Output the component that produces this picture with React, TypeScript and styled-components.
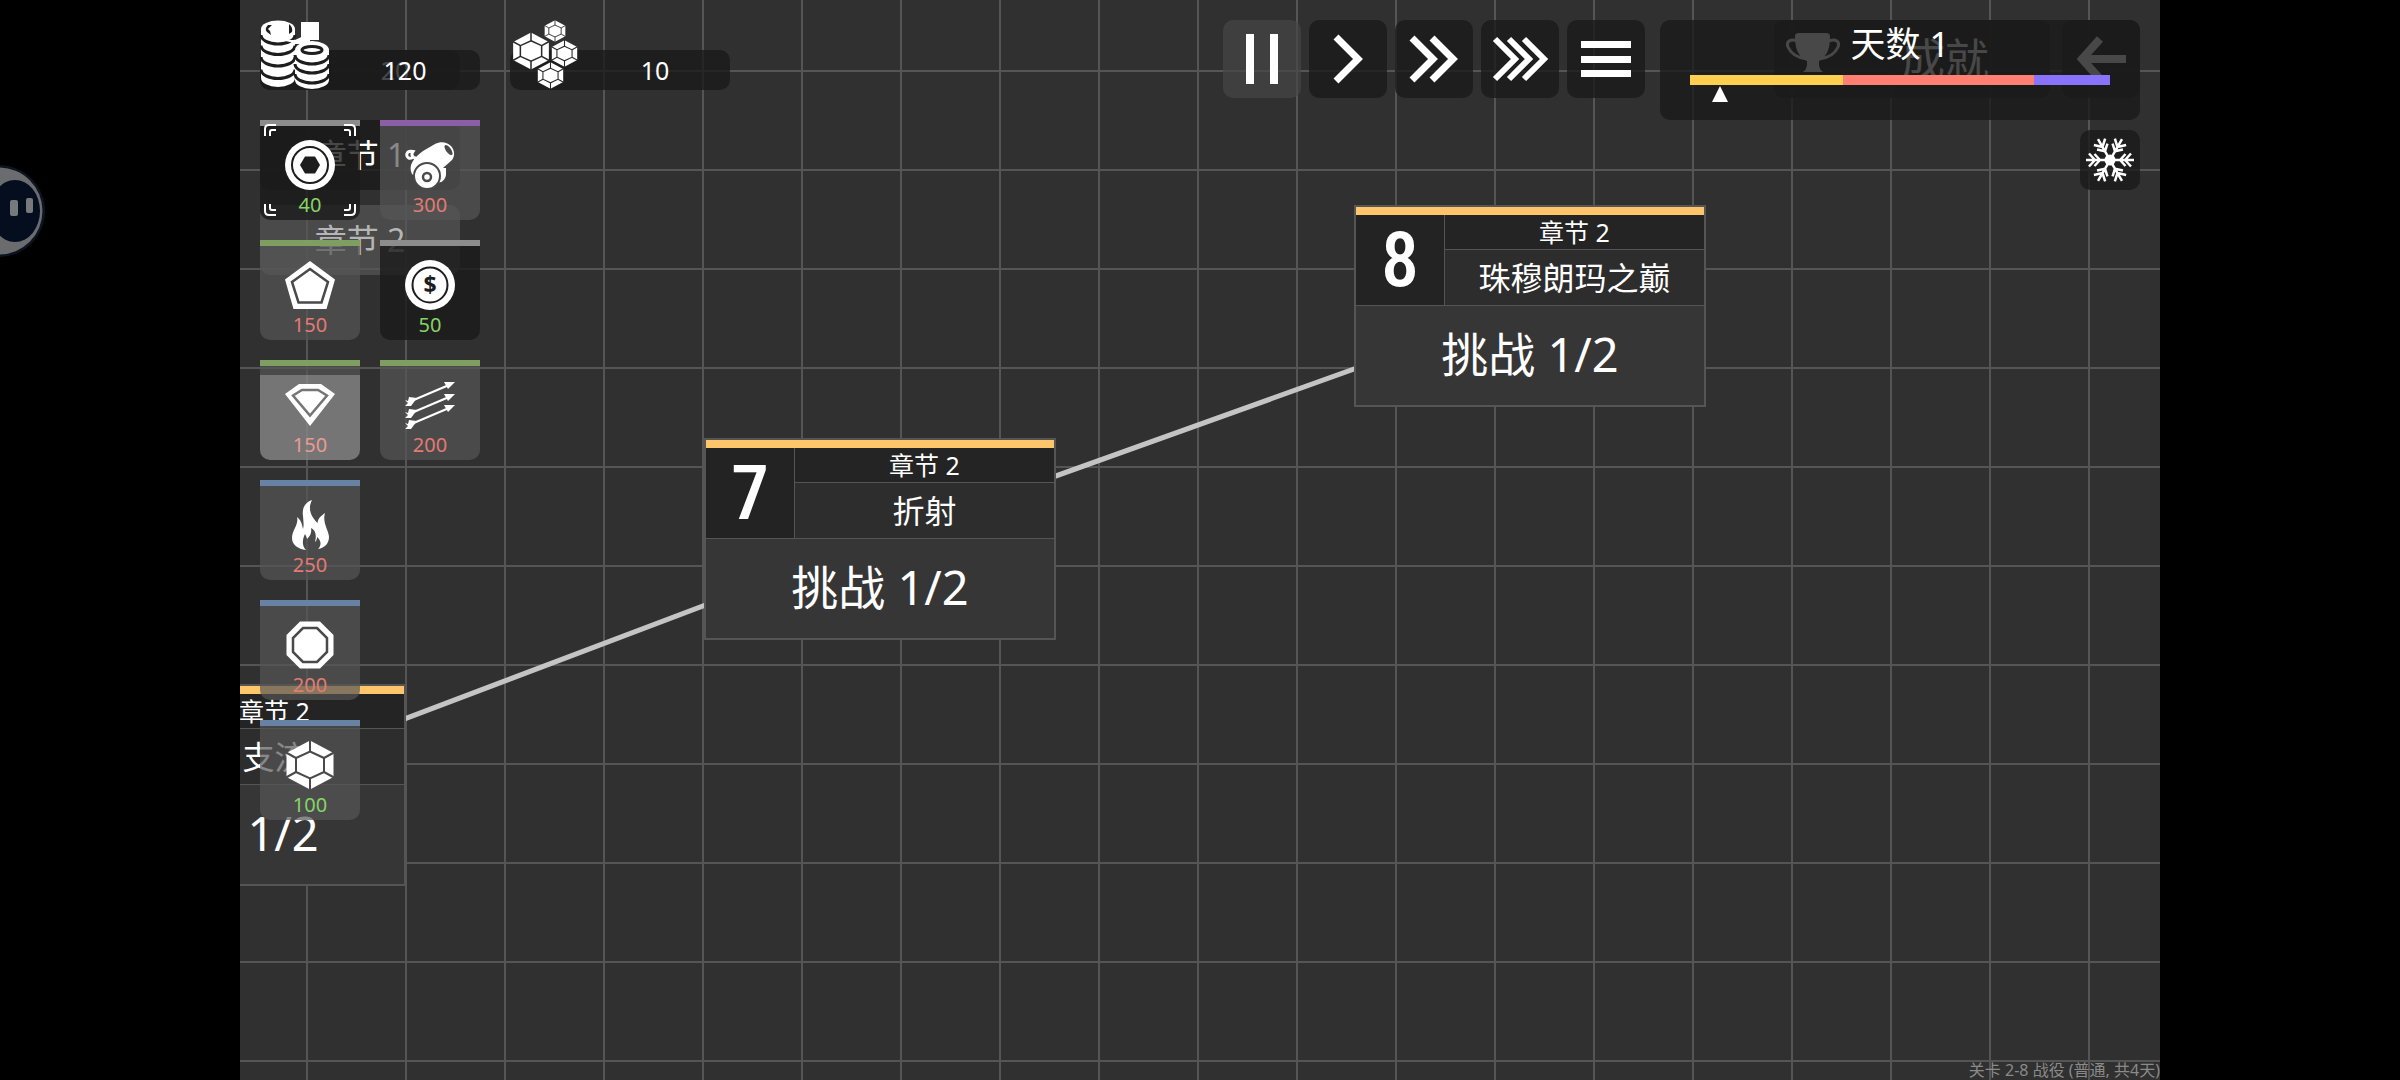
import React from "react";
import styled, { createGlobalStyle } from "styled-components";

const GlobalStyle = createGlobalStyle`
  *, *::before, *::after { box-sizing: border-box; }
  body {
    margin: 0;
    background: #000;
    color: #fff;
    font-family: "Noto Sans", "Noto Sans CJK SC", sans-serif;
  }
  button {
    border: 0;
    padding: 0;
    margin: 0;
    color: inherit;
    font: inherit;
    cursor: pointer;
  }
`;

const DARK = "rgba(26, 26, 26, 0.8)";
const MUTED = "rgba(85, 85, 85, 0.7)";
const INK_DARK = "#1d1d1d";
const INK_MUTED = "#4a4a4a";

const Screen = styled.div`
  display: flex;
  justify-content: center;
  height: 100vh;
  position: relative;
  overflow: hidden;
`;

/* 16:9 play field, layers share the single grid cell */
const Stage = styled.main`
  display: grid;
  height: 100%;
  aspect-ratio: 16 / 9;
  overflow: hidden;
  background-color: #303030;
  background-image: linear-gradient(to right, #555 2px, transparent 2px),
    linear-gradient(to bottom, #555 2px, transparent 2px);
  background-size: 99px 99px;
  background-position: 66px 70px;
  > * { grid-area: 1 / 1; min-width: 0; min-height: 0; }
`;

const Layer = styled.div`
  display: flex;
  justify-content: space-between;
  align-items: flex-start;
  padding: 20px;
`;

const Side = styled.div<{ $end?: boolean; $gap: number }>`
  display: flex;
  flex-direction: column;
  align-items: ${(p) => (p.$end ? "flex-end" : "flex-start")};
  gap: ${(p) => p.$gap}px;
`;

const Row = styled.div<{ $gap: number }>`
  display: flex;
  align-items: flex-start;
  gap: ${(p) => p.$gap}px;
`;

/* ---------- campaign map ---------- */

const MapCanvas = styled.div`
  position: relative;
  overflow: hidden;
`;

const Links = styled.svg`
  position: absolute;
  inset: 0;
  width: 100%;
  height: 100%;
`;

const Level = styled.button<{ $x: number; $y: number }>`
  position: absolute;
  left: ${(p) => p.$x}px;
  top: ${(p) => p.$y}px;
  width: 352px;
  display: grid;
  grid-template-columns: 89px 1fr;
  grid-template-rows: 8px 35px 56px 99px;
  border: 2px solid #555;
  background: #363636;
`;

const LevelStripe = styled.span`
  grid-column: 1 / -1;
  background: #ffc56b;
`;

const LevelNumber = styled.span`
  grid-row: 2 / 4;
  display: flex;
  align-items: center;
  justify-content: center;
  background: #232323;
  border-right: 1px solid #555;
  border-bottom: 1px solid #555;
  font-family: "Roboto Condensed", Roboto, sans-serif;
  font-weight: 500;
  font-size: 76px;
  line-height: 80px;
`;

const LevelChapter = styled.span`
  background: #242424;
  border-bottom: 1px solid #555;
  font-size: 25px;
  line-height: 34px;
`;

const LevelName = styled.span`
  background: #2d2d2d;
  border-bottom: 1px solid #555;
  font-size: 32px;
  line-height: 55px;
`;

const LevelChallenge = styled.span`
  grid-column: 1 / -1;
  font-size: 47px;
  line-height: 96px;
`;

/* ---------- shared HUD parts ---------- */

const Resource = styled.div<{ $width: number }>`
  width: ${(p) => p.$width}px;
  display: grid;
  grid-template: 30px 40px / 70px 1fr;
`;

const ResourcePlate = styled.div`
  grid-area: 2 / 1 / 3 / 3;
  background: ${DARK};
  border-radius: 10px;
`;

const ResourceIcon = styled.svg`
  grid-area: 1 / 1 / 3 / 2;
  width: 70px;
  height: 70px;
`;

const ResourceValue = styled.span`
  grid-area: 2 / 2;
  font-size: 25px;
  line-height: 40px;
  text-align: center;
`;

const SquareButton = styled.button<{ $muted?: boolean; $size?: number }>`
  width: ${(p) => p.$size ?? 78}px;
  height: ${(p) => p.$size ?? 78}px;
  border-radius: 10px;
  background: ${(p) => (p.$muted ? "rgba(70, 70, 70, 0.7)" : DARK)};
  svg { display: block; width: 100%; height: 100%; }
`;

/* ---------- campaign menu ---------- */

const ChapterList = styled.nav`
  display: flex;
  flex-direction: column;
  gap: 15px;
`;

const ChapterButton = styled.button<{ $muted?: boolean }>`
  width: 200px;
  height: 70px;
  border-radius: 10px;
  background: ${(p) => (p.$muted ? MUTED : DARK)};
  && { color: ${(p) => (p.$muted ? "#b5b5b5" : "#fff")}; }
  font-size: 32px;
  line-height: 66px;
`;

const AchievementButton = styled.button`
  display: flex;
  align-items: center;
  width: 276px;
  height: 78px;
  padding-left: 12px;
  border-radius: 10px;
  background: ${DARK};
  svg { width: 54px; height: 54px; }
`;

const AchievementLabel = styled.span`
  flex: 1;
  font-size: 44px;
  line-height: 72px;
`;

/* ---------- towers ---------- */

const TowerGrid = styled.div`
  display: grid;
  grid-template-rows: repeat(6, 100px);
  grid-auto-columns: 100px;
  grid-auto-flow: column;
  gap: 20px;
`;

const tierColors = {
  gray: "#8c8c8c",
  purple: "#8c5ea6",
  green: "#7f9f61",
  blue: "#6682a4",
};

const TowerCard = styled.button<{ $tier: keyof typeof tierColors; $muted: boolean }>`
  position: relative;
  display: flex;
  flex-direction: column;
  align-items: center;
  border-radius: 0 0 10px 10px;
  background: ${(p) => (p.$muted ? MUTED : DARK)};
  &::before {
    content: "";
    width: 100%;
    height: 6px;
    margin-bottom: 14px;
    background: ${(p) => tierColors[p.$tier]};
  }
`;

const TowerIcon = styled.svg`
  position: relative;
  width: 50px;
  height: 50px;
`;

const TowerPrice = styled.span<{ $affordable: boolean }>`
  font-size: 20px;
  line-height: 30px;
  color: ${(p) => (p.$affordable ? "#86d466" : "#e27b72")};
`;

const Charge = styled.span`
  position: absolute;
  inset: 15px 0 0;
  border-radius: 0 0 10px 10px;
  background: rgba(255, 255, 255, 0.24);
`;

const Brackets = styled.svg`
  position: absolute;
  inset: 4px;
  width: 92px;
  height: 92px;
`;

/* ---------- day panel ---------- */

const DayPanel = styled.section`
  width: 480px;
  height: 100px;
  padding: 0 30px;
  border-radius: 10px;
  background: ${DARK};
`;

const DayTitle = styled.h1`
  margin: 0 0 7px;
  font-size: 35px;
  font-weight: 400;
  line-height: 48px;
  text-align: center;
`;

const DayBar = styled.div`
  display: flex;
  height: 10px;
`;

const DayPhase = styled.span<{ $share: number; $color: string }>`
  flex: ${(p) => p.$share};
  background: ${(p) => p.$color};
`;

const DayMarker = styled.svg`
  display: block;
  width: 16px;
  height: 16px;
  margin: 1px 0 0 22px;
`;

const Footer = styled.footer`
  align-self: end;
  justify-self: end;
  color: #8a8a8a;
  font-size: 16px;
  line-height: 20px;
`;

/* floating assist ball docked at the screen edge */
const AssistBall = styled.svg`
  position: absolute;
  left: 0;
  top: 165px;
  width: 48px;
  height: 92px;
`;

/* ---------- drawings ---------- */

const HEX = "25,0.5 48.5,13 48.5,37 25,49.5 1.5,37 1.5,13";

const HexGem = ({ ink }: { ink: string }) => (
  <g>
    <polygon points={HEX} fill="#fff" />
    <g fill="none" stroke={ink} strokeWidth="2">
      <polygon points="25,11.5 39,18 39,32 25,38.5 11,32 11,18" />
      <path d="M25 0V11.5M25 38.5V50M39 18L49 12.5M39 32L49 37.5M11 18L1 12.5M11 32L1 37.5" />
    </g>
  </g>
);

const CoinStackIcon = () => (
  <ResourceIcon viewBox="0 0 70 70">
    <path d="M41 2h18v18h-18z" fill="#fff" />
    <path d="M1 9V58A17 9 0 0 0 35 58V9z" fill="#fff" />
    <ellipse cx="18" cy="9" rx="17" ry="8.5" fill="#fff" />
    <path d="M29 4Q33 7 32 12L29 14z M8 5Q4 9 7 12L11 15L10 11L8 9L12 5z" fill={INK_DARK} />
    <g fill="none" stroke={INK_DARK} strokeWidth="3">
      <path d="M1 15A17 9 0 0 0 35 15" />
      <path d="M1 25.5A17 9 0 0 0 35 25.5" />
      <path d="M1 37A17 9 0 0 0 35 37" />
      <path d="M1 49.5A17 9 0 0 0 35 49.5" />
    </g>
    <path d="M11 4H29V19H20z" fill="#fff" />
    <path d="M20 20L35 20L50 13V24H35L30 22z" fill="#fff" />
    <path d="M35 30V60A17 9 0 0 0 69 60V30z" fill="#fff" />
    <ellipse cx="52" cy="30" rx="17" ry="9" fill="#fff" />
    <ellipse cx="52" cy="30" rx="10" ry="3.5" fill="#fff" stroke={INK_DARK} strokeWidth="3" />
    <g fill="none" stroke={INK_DARK} strokeWidth="3">
      <path d="M35 35A17 9 0 0 0 69 35" />
      <path d="M35 44A17 9 0 0 0 69 44" />
      <path d="M35 54A17 9 0 0 0 69 54" />
    </g>
  </ResourceIcon>
);

const gemSpots = [
  { x: 2, y: 12, size: 38 },
  { x: 34, y: 0, size: 22 },
  { x: 41, y: 20, size: 27 },
  { x: 27, y: 42, size: 27 },
];

const GemClusterIcon = () => (
  <ResourceIcon viewBox="0 0 70 70">
    {gemSpots.map((g) => (
      <svg key={g.x} x={g.x} y={g.y} width={g.size} height={g.size} viewBox="0 0 50 50">
        <HexGem ink="#2a2a2a" />
      </svg>
    ))}
  </ResourceIcon>
);

const Arrow = ({ y }: { y: number }) => (
  <g transform={`translate(0 ${y})`}>
    <path d="M4 22L44 5" stroke="#fff" strokeWidth="2.2" />
    <path d="M50 2L39 2L43 9z" fill="#fff" />
    <path d="M0 20L3 21L4 17L12 18L6 26L0 26L3 23z" fill="#fff" />
  </g>
);

const towerDrawings: Record<string, React.ReactNode> = {
  nut: (
    <>
      <circle cx="25" cy="25" r="25" fill="#fff" />
      <circle cx="25" cy="25" r="18" fill="none" stroke={INK_DARK} strokeWidth="2" />
      <polygon points="15,25 20,16.5 30,16.5 35,25 30,33.5 20,33.5" fill={INK_DARK} />
    </>
  ),
  pentagon: (
    <>
      <polygon points="25,1 50,19.5 41.5,49 8.5,49 0,19.5" fill="#fff" />
      <polygon points="25,9 43,22 36.5,42.5 13.5,42.5 7,22" fill="none" stroke={INK_MUTED} strokeWidth="2.5" />
    </>
  ),
  diamond: (
    <>
      <polygon points="14,4 36,4 50,14 25,46 0,14" fill="#fff" />
      <polygon points="17,10 33,10 42,15.5 25,35.5 8,15.5" fill="none" stroke="#757575" strokeWidth="2.5" />
    </>
  ),
  fire: (
    <path
      fill="#fff"
      d="M27 0C19 3 17 9 18 16C18.5 22 19 26 18 29C17 24 16 20 12 17C14 25 7 30 7 38C7 45 13 49 21 50C16 45 18 38 20 34C21 36 22 38 22 39C25 36 27 33 26 28C30 30 32 34 30 42C31 41 32 40 32 37C37 41 36 46 33 49C40 48 44 43 44 37C44 31 37 23 40 13C36 16 33 18 32.5 23C27 17 22 10 27 0Z"
    />
  ),
  octagon: (
    <>
      <polygon points="15,1.5 35,1.5 48.5,15 48.5,35 35,48.5 15,48.5 1.5,35 1.5,15" fill="#fff" />
      <polygon points="18,8 32,8 42,18 42,32 32,42 18,42 8,32 8,18" fill="none" stroke={INK_MUTED} strokeWidth="2.5" />
    </>
  ),
  hexagon: <HexGem ink={INK_MUTED} />,
  cannon: (
    <>
      <path d="M9 17C4 20 1 17 2 13.5C3 11 6 11 8 11.5C6 14 7 18 11 18" fill="none" stroke="#fff" strokeWidth="3" />
      <path d="M7 34C3 26 8 18 18 11L30 4C36 1 42 2 46 6C50 11 50 16 47 20L38 28H41V35C40 40 36 44 31 42L20 44z" fill="#fff" />
      <ellipse cx="43.5" cy="10" rx="2.5" ry="6" transform="rotate(-36 43.5 10)" fill={INK_MUTED} />
      <circle cx="22" cy="36" r="13" fill="#fff" stroke={INK_MUTED} strokeWidth="2" />
      <circle cx="22" cy="37" r="4" fill="none" stroke={INK_MUTED} strokeWidth="2.5" />
    </>
  ),
  coin: (
    <>
      <circle cx="25" cy="25" r="25" fill="#fff" />
      <circle cx="25" cy="25" r="17.5" fill="none" stroke={INK_DARK} strokeWidth="2" />
      <text x="25" y="33" textAnchor="middle" fontSize="23" fontWeight="700" fill={INK_DARK}>$</text>
    </>
  ),
  arrows: (
    <>
      <Arrow y={0} />
      <Arrow y={12} />
      <Arrow y={23} />
    </>
  ),
};

const Snowflake = () => (
  <svg viewBox="0 0 60 60" aria-hidden="true">
    <circle cx="30" cy="30" r="5.5" fill="#fff" />
    {[0, 60, 120, 180, 240, 300].map((angle) => (
      <path
        key={angle}
        transform={`rotate(${angle} 30 30)`}
        d="M30 30H54M45 30L51 23.5M45 30L51 36.5M40 30L45.5 24M40 30L45.5 36"
        fill="none"
        stroke="#fff"
        strokeWidth="2.5"
      />
    ))}
  </svg>
);

const Trophy = () => (
  <svg viewBox="0 0 54 54" aria-hidden="true">
    <path d="M9 4Q9 1 13 1H40Q44 1 44 4C44 15 42 24 33 29V32Q33 37 37 40H17Q21 37 21 32V29C11 24 9 15 9 4Z" fill="#fff" />
    <path d="M11 9C4 6 0 10 2 15C5 22 13 26 21 27M43 9C50 6 54 10 52 15C49 22 41 26 33 27" fill="none" stroke="#fff" strokeWidth="3" />
  </svg>
);

const Chevrons = ({ starts, reach, width }: { starts: number[]; reach: number; width: number }) => (
  <svg viewBox="0 0 78 78" aria-hidden="true">
    {starts.map((x) => (
      <polyline
        key={x}
        points={`${x},${39 - reach} ${x + reach},39 ${x},${39 + reach}`}
        fill="none"
        stroke="#fff"
        strokeWidth={width}
      />
    ))}
  </svg>
);

/* ---------- data ---------- */

const levels = [
  { id: 6, x: -186, y: 684, name: "支流" },
  { id: 7, x: 464, y: 438, name: "折射" },
  { id: 8, x: 1114, y: 205, name: "珠穆朗玛之巅" },
];

type Tower = { icon: string; price: number; tier: keyof typeof tierColors; charging?: boolean; selected?: boolean; name: string };

const coins = 120;

const towers: Tower[] = [
  { icon: "nut", price: 40, tier: "gray", selected: true, name: "基础" },
  { icon: "pentagon", price: 150, tier: "green", name: "五边形" },
  { icon: "diamond", price: 150, tier: "green", charging: true, name: "钻石" },
  { icon: "fire", price: 250, tier: "blue", name: "火焰" },
  { icon: "octagon", price: 200, tier: "blue", name: "八边形" },
  { icon: "hexagon", price: 100, tier: "blue", name: "六边形" },
  { icon: "cannon", price: 300, tier: "purple", name: "加农炮" },
  { icon: "coin", price: 50, tier: "gray", name: "金币" },
  { icon: "arrows", price: 200, tier: "green", name: "箭" },
];

const readyTowers = ["nut", "coin"];

export default function App() {
  return (
    <>
      <GlobalStyle />
      <Screen>
        <Stage>
          <MapCanvas>
            <Links aria-hidden="true">
              <polyline
                points={levels.map((l) => `${l.x + 176},${l.y + 101}`).join(" ")}
                fill="none"
                stroke="#c4c4c4"
                strokeWidth="5"
              />
            </Links>
            {levels.map((level) => (
              <Level key={level.id} $x={level.x} $y={level.y}>
                <LevelStripe />
                <LevelNumber>{level.id}</LevelNumber>
                <LevelChapter>章节 2</LevelChapter>
                <LevelName>{level.name}</LevelName>
                <LevelChallenge>挑战 1/2</LevelChallenge>
              </Level>
            ))}
          </MapCanvas>

          <Layer>
            <Side $gap={30}>
              <Resource $width={200}>
                <ResourcePlate />
                <ResourceValue>20</ResourceValue>
              </Resource>
              <ChapterList>
                <ChapterButton>章节 1</ChapterButton>
                <ChapterButton $muted>章节 2</ChapterButton>
              </ChapterList>
            </Side>
            <Row $gap={12}>
              <AchievementButton>
                <Trophy />
                <AchievementLabel>成就</AchievementLabel>
              </AchievementButton>
              <SquareButton aria-label="返回">
                <svg viewBox="0 0 78 78" aria-hidden="true">
                  <path d="M64 39H20M38 19L20 39L38 59" fill="none" stroke="#fff" strokeWidth="8" />
                </svg>
              </SquareButton>
            </Row>
          </Layer>

          <Layer>
            <Side $gap={30}>
              <Row $gap={30}>
                <Resource $width={220}>
                  <ResourcePlate />
                  <CoinStackIcon />
                  <ResourceValue>{coins}</ResourceValue>
                </Resource>
                <Resource $width={220}>
                  <ResourcePlate />
                  <GemClusterIcon />
                  <ResourceValue>10</ResourceValue>
                </Resource>
              </Row>
              <TowerGrid>
                {towers.map((tower) => (
                  <TowerCard
                    key={tower.icon}
                    aria-label={tower.name}
                    $tier={tower.tier}
                    $muted={!readyTowers.includes(tower.icon)}
                  >
                    {tower.charging && <Charge />}
                    <TowerIcon viewBox="0 0 50 50">{towerDrawings[tower.icon]}</TowerIcon>
                    <TowerPrice $affordable={tower.price <= coins}>{tower.price}</TowerPrice>
                    {tower.selected && (
                      <Brackets viewBox="0 0 92 92" fill="none" stroke="#fff" strokeWidth="2">
                        {[0, 90, 180, 270].map((angle) => (
                          <path
                            key={angle}
                            transform={`rotate(${angle} 46 46)`}
                            d="M1 12V5Q1 1 5 1H12M6 12V8Q6 6 8 6H12"
                          />
                        ))}
                      </Brackets>
                    )}
                  </TowerCard>
                ))}
              </TowerGrid>
            </Side>

            <Side $end $gap={10}>
              <Row $gap={15}>
                <Row $gap={8}>
                  <SquareButton $muted aria-label="暂停">
                    <svg viewBox="0 0 78 78" aria-hidden="true">
                      <path d="M23 14h8v50h-8zM47 14h8v50h-8z" fill="#fff" />
                    </svg>
                  </SquareButton>
                  <SquareButton aria-label="播放">
                    <Chevrons starts={[27]} reach={22} width={7} />
                  </SquareButton>
                  <SquareButton aria-label="快进">
                    <Chevrons starts={[17, 37]} reach={21} width={7} />
                  </SquareButton>
                  <SquareButton aria-label="最快">
                    <Chevrons starts={[14, 28, 43]} reach={20} width={6} />
                  </SquareButton>
                  <SquareButton aria-label="菜单">
                    <svg viewBox="0 0 78 78" aria-hidden="true">
                      <path d="M14 21h50v7h-50zM14 36h50v7h-50zM14 50h50v7h-50z" fill="#fff" />
                    </svg>
                  </SquareButton>
                </Row>
                <DayPanel>
                  <DayTitle>天数 1</DayTitle>
                  <DayBar>
                    <DayPhase $share={153} $color="#ffd050" />
                    <DayPhase $share={191} $color="#ff8070" />
                    <DayPhase $share={76} $color="#8a73fb" />
                  </DayBar>
                  <DayMarker viewBox="0 0 16 16">
                    <path d="M8 0L16 16H0z" fill="#fff" />
                  </DayMarker>
                </DayPanel>
              </Row>
              <SquareButton $size={60} aria-label="冰冻">
                <Snowflake />
              </SquareButton>
            </Side>
          </Layer>

          <Footer>关卡 2-8 战役 (普通, 共4天)</Footer>
        </Stage>

        <AssistBall viewBox="0 0 48 92" aria-hidden="true">
          <circle cx="-1" cy="46" r="46" fill="#0c1420" />
          <circle cx="-1" cy="46" r="43.5" fill="#6a6c6e" />
          <ellipse cx="15" cy="46" rx="25" ry="31" fill="#040e1f" />
          <rect x="10" y="35" width="8" height="16" rx="2" fill="#77797b" />
          <rect x="26" y="33" width="7" height="15" rx="2" fill="#77797b" />
        </AssistBall>
      </Screen>
    </>
  );
}
